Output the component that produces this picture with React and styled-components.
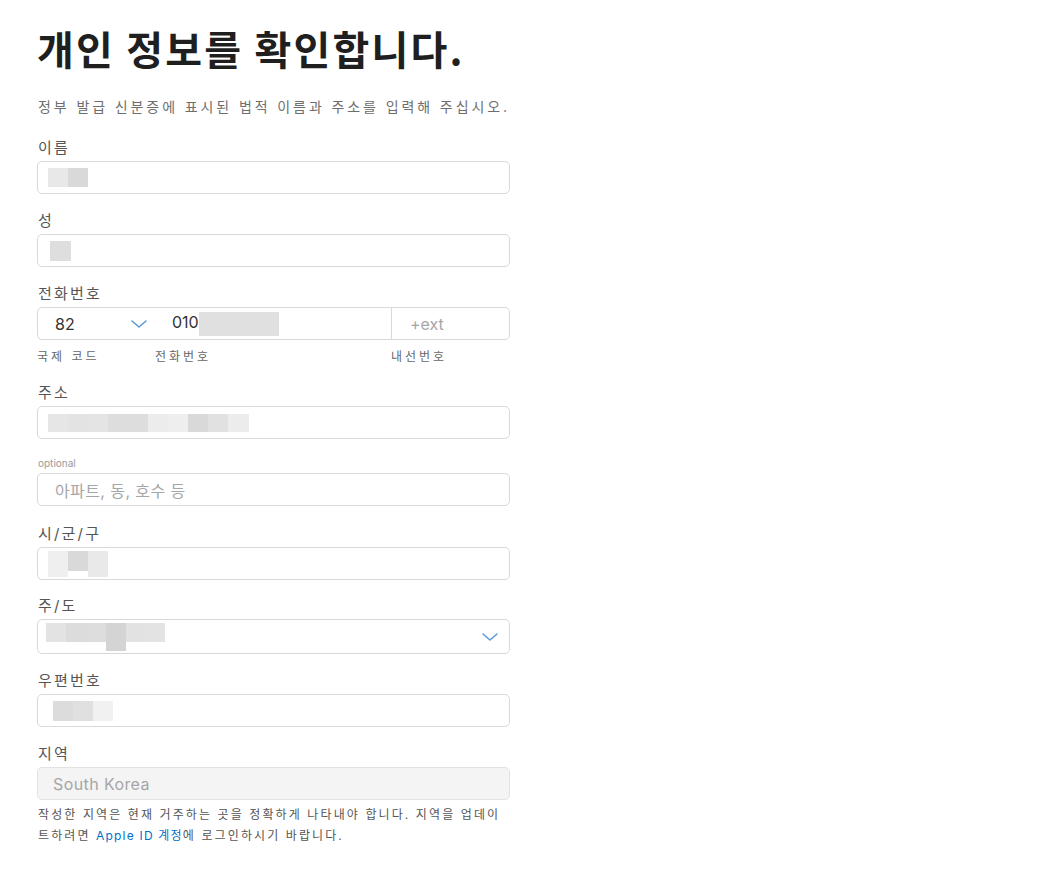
import styled, { createGlobalStyle } from 'styled-components'

const GlobalStyle = createGlobalStyle`
  html, body {
    margin: 0;
    padding: 0;
    background: #ffffff;
  }
  body {
    font-family: Inter, "Noto Sans CJK KR", sans-serif;
    color: #333333;
  }
`

const Page = styled.div`
  width: 473px;
  padding: 22px 0 30px 37px;
`

const Title = styled.h1`
  margin: 0;
  font-family: "Noto Sans CJK KR", sans-serif;
  font-size: 40px;
  line-height: 52px;
  font-weight: 600;
  color: #1f1f1f;
  letter-spacing: 2.2px;
`

const Intro = styled.p`
  margin: 23px 0 21px 1px;
  font-size: 14px;
  line-height: 20px;
  color: #6e6e6e;
  letter-spacing: 2.9px;
`

const Field = styled.div`
  display: flex;
  flex-direction: column;
  margin-bottom: ${(p) => p.$gap ?? 18}px;
`

const Label = styled.label`
  margin-left: 1px;
  margin-bottom: 3px;
  font-size: ${(p) => (p.$small ? 10 : 15)}px;
  line-height: ${(p) => (p.$small ? 14 : 20)}px;
  color: ${(p) => (p.$small ? '#9a9a9a' : '#555555')};
  letter-spacing: ${(p) => (p.$small ? 0 : 2.2)}px;
`

const Box = styled.div`
  box-sizing: border-box;
  height: ${(p) => p.$h ?? 33}px;
  display: flex;
  align-items: center;
  justify-content: space-between;
  padding: 0 11px 0 ${(p) => p.$pl ?? 10}px;
  border: 1px solid ${(p) => (p.$disabled ? '#e2e2e2' : '#d9d9d9')};
  border-radius: 5px;
  background: ${(p) => (p.$disabled ? '#f4f4f4' : '#ffffff')};
  font-size: 16px;
  letter-spacing: ${(p) => (p.$muted ? 0.4 : 0)}px;
  color: ${(p) => (p.$muted ? '#a6a6a6' : '#333333')};
`

const Mosaic = styled.div`
  display: flex;
  align-items: flex-start;
`

const Cell = styled.span`
  display: block;
  width: ${(p) => p.$w ?? 20}px;
  height: ${(p) => p.$h ?? 19}px;
  background: ${(p) => p.$c};
`

const PhoneBox = styled.div`
  box-sizing: border-box;
  height: 33px;
  display: grid;
  grid-template-columns: 117px 236px 1fr;
  border: 1px solid #d9d9d9;
  border-radius: 5px;
  font-size: 16px;
`

const PhonePart = styled.div`
  display: flex;
  align-items: center;
  justify-content: space-between;
  padding: 0 8px 0 ${(p) => p.$pl}px;
  border-left: ${(p) => (p.$divider ? '1px solid #d9d9d9' : 'none')};
  color: ${(p) => (p.$muted ? '#a6a6a6' : '#333333')};
`

const SubLabels = styled.div`
  display: grid;
  grid-template-columns: 118px 236px 1fr;
  margin-top: 8px;
  font-size: 12px;
  line-height: 18px;
  color: #666666;
  letter-spacing: 3px;
`

const Help = styled.p`
  margin: 4px 0 0 1px;
  font-size: 12px;
  line-height: 21px;
  color: #555555;
  letter-spacing: 2.1px;
`

const Link = styled.a`
  color: #0070c9;
  text-decoration: none;
  letter-spacing: 1.2px;
`

const Chevron = () => (
  <svg width="16" height="8" viewBox="0 0 16 8" fill="none">
    <path d="M1 1l7 6 7-6" stroke="#5b9bd5" strokeWidth="1.6" strokeLinecap="round" strokeLinejoin="round" />
  </svg>
)

const Blur = ({ cells }) => (
  <Mosaic>
    {cells.map((c, i) => (
      <Cell key={i} $w={c[0]} $c={c[1]} $h={c[2]} />
    ))}
  </Mosaic>
)

const App = () => (
  <Page>
    <GlobalStyle />
    <Title>개인 정보를 확인합니다.</Title>
    <Intro>정부 발급 신분증에 표시된 법적 이름과 주소를 입력해 주십시오.</Intro>

    <Field $gap={17}>
      <Label>이름</Label>
      <Box>
        <Blur cells={[[20, '#e8e8e8'], [20, '#d9d9d9']]} />
      </Box>
    </Field>

    <Field $gap={17}>
      <Label>성</Label>
      <Box $pl={12}>
        <Blur cells={[[21, '#dedede', 20]]} />
      </Box>
    </Field>

    <Field $gap={17}>
      <Label>전화번호</Label>
      <PhoneBox>
        <PhonePart $pl={17}>
          82
          <Chevron />
        </PhonePart>
        <PhonePart $pl={17}>
          <Mosaic>
            010
            <Cell $w={80} $h={24} $c="#e0e0e0" />
          </Mosaic>
        </PhonePart>
        <PhonePart $pl={18} $divider $muted>+ext</PhonePart>
      </PhoneBox>
      <SubLabels>
        <span>국제 코드</span>
        <span>전화번호</span>
        <span>내선번호</span>
      </SubLabels>
    </Field>

    <Field $gap={17}>
      <Label>주소</Label>
      <Box>
        <Blur
          cells={[
            [20, '#e6e6e6', 18],
            [20, '#e3e3e3', 18],
            [20, '#e4e4e4', 18],
            [40, '#dddddd', 18],
            [20, '#ececec', 18],
            [20, '#eeeeee', 18],
            [20, '#d9d9d9', 18],
            [20, '#e1e1e1', 18],
            [21, '#ececec', 18],
          ]}
        />
      </Box>
    </Field>

    <Field $gap={18}>
      <Label $small>optional</Label>
      <Box $pl={17} $muted>아파트, 동, 호수 등</Box>
    </Field>

    <Field $gap={16}>
      <Label>시/군/구</Label>
      <Box>
        <Blur cells={[[20, '#efefef', 26], [20, '#d9d9d9', 20], [20, '#e9e9e9', 26]]} />
      </Box>
    </Field>

    <Field $gap={17}>
      <Label>주/도</Label>
      <Box $h={35} $pl={8}>
        <Blur
          cells={[
            [20, '#e3e3e3'],
            [20, '#dcdcdc'],
            [20, '#dddddd'],
            [20, '#d4d4d4', 28],
            [20, '#e2e2e2'],
            [19, '#e3e3e3'],
          ]}
        />
        <Chevron />
      </Box>
    </Field>

    <Field $gap={17}>
      <Label>우편번호</Label>
      <Box $pl={15}>
        <Blur cells={[[20, '#dcdcdc', 20], [20, '#e0e0e0', 20], [20, '#f1f1f1', 20]]} />
      </Box>
    </Field>

    <Field $gap={0}>
      <Label>지역</Label>
      <Box $disabled $muted $pl={15}>South Korea</Box>
      <Help>
        작성한 지역은 현재 거주하는 곳을 정확하게 나타내야 합니다. 지역을 업데이
        <br />
        트하려면 <Link href="#">Apple ID 계정</Link>에 로그인하시기 바랍니다.
      </Help>
    </Field>
  </Page>
)

export default App
